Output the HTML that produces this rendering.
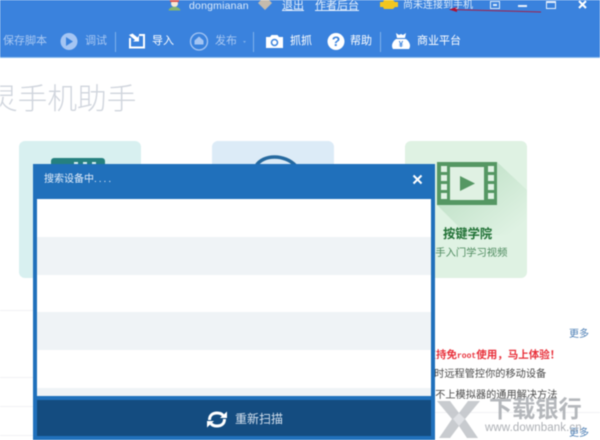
<!DOCTYPE html>
<html><head><meta charset="utf-8">
<style>
html,body{margin:0;padding:0;background:#fff}
#p{position:relative;width:600px;height:440px;overflow:hidden;background:#fff;font-family:"Liberation Sans","Noto Sans CJK SC",sans-serif;filter:blur(.45px)}
#p div,#p span.a{position:absolute;white-space:nowrap}
.t{font-size:11px;line-height:14px;color:#fff}
.d{color:#a9c8f2}
.l{height:1px;background:#f1f2f4}
.card{top:141px;width:122px;height:137px;border-radius:6px}
</style></head><body><div id="p">
<div style="left:0;top:0;width:600px;height:57px;background:#3a82dd"></div>
<div style="left:0;top:57px;width:600px;height:1px;background:#8cbcee"></div>

<svg style="position:absolute;left:0;top:0" width="600" height="58" viewBox="0 0 600 58" fill="none">
<circle cx="174.500" cy="3.500" r="3.500" fill="#f6e8d6"/><path d="M170 0h9v2h-9z" fill="#d9534f"/><path d="M168.500 10.500c1-5 11-5 12 0z" fill="#86b56e"/>
<path d="M258 3l3-3h8l3 3-7 7z" fill="#c4bbad"/>
<path d="M380 2h3l1-2h9l2 2h3v5h-3l-2 2h-9l-1-2h-3z" fill="#f2c61f"/>
<path d="M541 12L450 9.500" stroke="#a0204a" stroke-width="1"/><path d="M449 9.500l8-2.500v5z" fill="#b01030"/>
<rect x="490.500" y="1.500" width="9" height="7" stroke="#dcebfb" fill="none"/><rect x="493" y="4" width="4" height="2" fill="#dcebfb"/>
<rect x="518" y="5" width="9" height="2" fill="#e8f1fc"/>
<rect x="546.500" y="1.500" width="9" height="7" stroke="#e8f1fc" fill="none"/><rect x="546" y="1" width="10" height="2" fill="#e8f1fc"/>
<path d="M579 1l7 7M586 1l-7 7" stroke="#fff" stroke-width="2"/>
<circle cx="69" cy="41.500" r="8.500" fill="#a4c5f3"/><path d="M66 37v9l7-4.500z" fill="#3a82dd"/>
<rect x="115" y="32" width="1" height="20" fill="#7fb0ea"/>
<path d="M130 38v9.500h14V35h-5" stroke="#fff" stroke-width="2"/><path d="M129 35l6 5-2 1.500h6v-6l-1.500 2-5-4z" fill="#fff"/>
<circle cx="199" cy="41.500" r="8.500" stroke="#a4c5f3" stroke-width="1.300"/><path d="M199 36.500l4.500 4v4h-9v-4z" fill="#a4c5f3"/>
<path d="M243 41h3l-1.500 2z" fill="#7fb0ea"/>
<rect x="253" y="32" width="1" height="20" fill="#7fb0ea"/>
<path d="M266 37h4l1.500-2h6l1.500 2h4v11h-17z" fill="#fff"/><circle cx="274.500" cy="42.500" r="3" stroke="#3a82dd" stroke-width="1.500"/>
<circle cx="336" cy="41.500" r="8.500" fill="#fff"/>
<rect x="380" y="32" width="1" height="20" fill="#7fb0ea"/>
<path d="M396 33l3 2 2-1 2 1 3-2-1 5h-8z" fill="#fff"/><path d="M396 39h10c4 3 5 7 3 10h-16c-2-3-1-7 3-10z" fill="#fff"/>
</svg>
<div style="left:328px;top:33px;width:16px;text-align:center;font:bold 14px/17px 'Liberation Sans',sans-serif;color:#3a82dd">?</div>
<div style="left:396px;top:40px;width:10px;text-align:center;font:bold 8px/9px 'Liberation Sans',sans-serif;color:#3a82dd">¥</div>

<div class="t" style="left:189px;top:-1px;font-size:10.500px;color:#dcebfb;letter-spacing:.2px">dongmianan</div>
<div class="t" style="left:282px;top:-1px;color:#e6f0fc;text-decoration:underline">退出</div>
<div class="t" style="left:315px;top:-1px;color:#e6f0fc;text-decoration:underline">作者后台</div>
<div class="t" style="left:403px;top:-1px;font-size:10px;color:#dcebfb">尚未连接到手机</div>

<div class="t d" style="left:3px;top:34px">保存脚本</div>
<div class="t d" style="left:85px;top:34px">调试</div>
<div class="t" style="left:152px;top:34px">导入</div>
<div class="t d" style="left:215px;top:34px">发布</div>
<div class="t" style="left:290px;top:34px">抓抓</div>
<div class="t" style="left:350px;top:34px">帮助</div>
<div class="t" style="left:417px;top:34px">商业平台</div>

<div style="left:-12px;top:82px;font-size:29.700px;line-height:36px;color:#d0d5dd;font-weight:300">灵手机助手</div>

<div class="card" style="left:19px;background:#d8f0f0"></div>
<div class="card" style="left:212px;background:#dcebf7"></div>
<div class="card" style="left:405px;background:#dff2e3"></div>
<div style="left:51px;top:158px;width:54px;height:10px;background:#25807f;border-radius:3px 3px 0 0"></div>
<div style="left:74px;top:162px;width:4px;height:2px;background:#d8f0f0"></div>
<div style="left:83px;top:162px;width:4px;height:2px;background:#d8f0f0"></div>
<div style="left:92px;top:162px;width:4px;height:2px;background:#d8f0f0"></div>
<svg style="position:absolute;left:250px;top:154px" width="50" height="12" fill="none"><path d="M6 12C13 0 35 0 46 12" stroke="#26699f" stroke-width="3.500"/></svg>

<svg style="position:absolute;left:405px;top:141px" width="122" height="137">
<defs><linearGradient id="g" x1="0.300" y1="0.300" x2="0.900" y2="0.900"><stop offset="0" stop-color="#c4e3cb"/><stop offset="1" stop-color="#dff2e3"/></linearGradient></defs>
<path d="M92 21l30 28v45H62L32 64z" fill="url(#g)"/>
<rect x="32" y="21" width="60" height="43" fill="#559763"/>
<rect x="45" y="26" width="34" height="33" fill="#e0f1e3"/>
<g fill="#dff2e3"><rect x="36" y="25" width="6" height="6"/><rect x="36" y="34" width="6" height="6"/><rect x="36" y="43" width="6" height="6"/><rect x="36" y="52" width="6" height="6"/><rect x="83" y="25" width="6" height="6"/><rect x="83" y="34" width="6" height="6"/><rect x="83" y="43" width="6" height="6"/><rect x="83" y="52" width="6" height="6"/></g>
<path d="M55 35v15l15-7.500z" fill="#559763"/>
</svg>
<div style="left:443px;top:227px;font-size:12.300px;line-height:15px;font-weight:bold;color:#1f7034">按键学院</div>
<div style="left:425px;top:247px;font-size:10.300px;line-height:14px;color:#4d8a5e">新手入门学习视频</div>

<div class="l" style="left:0;top:310px;width:33px"></div>
<div class="l" style="left:0;top:377px;width:33px"></div>
<div class="l" style="left:0;top:406px;width:33px"></div>
<div class="l" style="left:0;top:435px;width:33px"></div>
<div class="l" style="left:435px;top:412px;width:165px"></div>

<div style="left:569px;top:328px;font-size:10px;line-height:13px;color:#4d7fb5">更多</div>
<div style="left:569px;top:427px;font-size:10px;line-height:13px;color:#4d7fb5">更多</div>
<div style="left:425.500px;top:348px;font-size:10.500px;line-height:14px;font-weight:bold;color:#e8303a">支持免<span style="font:bold 8px 'Liberation Mono',monospace">root</span>使用，马上体验！</div>
<div style="left:424px;top:368px;font-size:10.200px;line-height:14px;color:#4a4a4a">实时远程管控你的移动设备</div>
<div style="left:425px;top:389px;font-size:10.200px;line-height:14px;color:#4a4a4a">装不上模拟器的通用解决方法</div>

<svg style="position:absolute;left:435px;top:399px" width="46" height="41"><path d="M2 2h13l9 12L33 2h12L30 20l13 19H32L24 27 15 39H4l13-19z" fill="#bec2c7" opacity=".85"/><path d="M24 14l6 6-6 7-6-7z" fill="#dfe1e5"/></svg>
<div style="left:489px;top:395px;font-size:23.200px;line-height:28px;color:#a8abb0;font-weight:bold;opacity:.85">下载银行</div>
<div style="left:485px;top:421px;font-size:11.500px;line-height:14px;letter-spacing:.1px;color:#adb0b5">www.downbank.cn</div>

<div style="left:33px;top:164px;width:402px;height:276px;background:#2070bb"></div>
<div style="left:37px;top:199px;width:394px;height:197px;background:#fff"></div>
<div style="left:37px;top:237px;width:394px;height:38px;background:#eff3f6"></div>
<div style="left:37px;top:312px;width:394px;height:38px;background:#eff3f6"></div>
<div style="left:37px;top:388px;width:394px;height:8px;background:#eff3f6"></div>
<div style="left:37px;top:400px;width:394px;height:36px;background:#144c80"></div>
<div class="t" style="left:44px;top:173px;font-size:10px;color:#e4eefa">搜索设备中<span style="letter-spacing:2px">....</span></div>
<svg style="position:absolute;left:412px;top:174px" width="11" height="11"><path d="M1.500 1.500l8 8M9.500 1.500l-8 8" stroke="#fff" stroke-width="2"/></svg>

<svg style="position:absolute;left:206px;top:410px" width="22" height="19" fill="none">
<path d="M3.500 10C3.500 5 7 3 11 3c3 0 5 1 6 2.500" stroke="#fff" stroke-width="3"/><path d="M14 8h7V1.500z" fill="#fff"/>
<path d="M18.500 9c0 5-3.500 7-7.500 7-3 0-5-1-6-2.500" stroke="#fff" stroke-width="3"/><path d="M8 11H1v6.500z" fill="#fff"/>
</svg>
<div style="left:235px;top:411px;font-size:12px;line-height:16px;color:#d5e1ee">重新扫描</div>
</div></body></html>
